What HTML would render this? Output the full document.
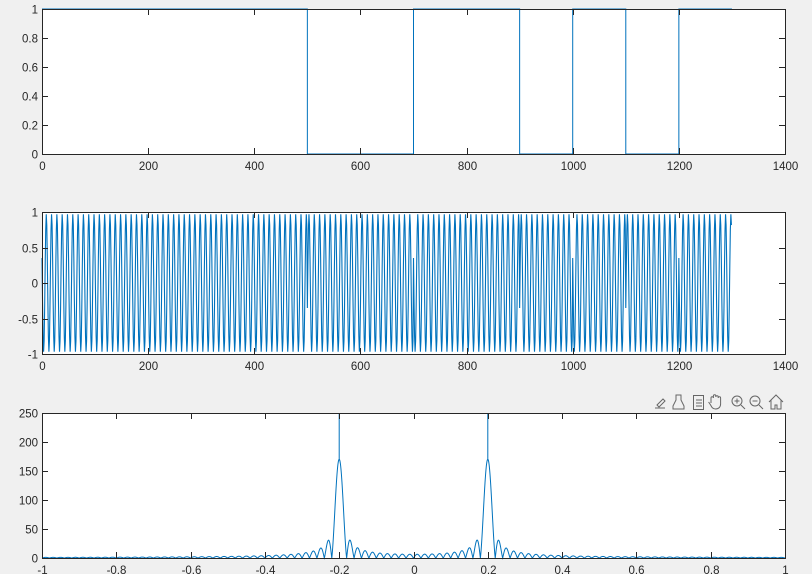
<!DOCTYPE html>
<html><head><meta charset="utf-8"><style>
html,body{margin:0;padding:0;background:#f0f0f0;width:812px;height:574px;overflow:hidden}
svg{display:block}
text{font-family:"Liberation Sans",sans-serif;font-size:11.5px;fill:#262626}
</style></head><body>
<svg id="s" width="812" height="574" xmlns="http://www.w3.org/2000/svg"></svg>
<script>
var S=document.getElementById('s'),out='';
var X0=42,X1=785;
function axes(y0,y1,xmin,xmax,ymin,ymax,xt,yt,xl,yl){
  var fx=function(v){return X0+(v-xmin)/(xmax-xmin)*(X1-X0)};
  var fy=function(v){return y1-(v-ymin)/(ymax-ymin)*(y1-y0)};
  out+='<rect x="'+X0+'" y="'+y0+'" width="'+(X1-X0)+'" height="'+(y1-y0)+'" fill="#fff"/>';
  return {fx:fx,fy:fy,fin:function(){
    out+='<rect x="'+(X0+.5)+'" y="'+(y0+.5)+'" width="'+(X1-X0)+'" height="'+(y1-y0)+'" fill="none" stroke="#262626" stroke-width="1"/>';
    xt.forEach(function(v,i){var x=Math.round(fx(v))+.5;
      out+='<line x1="'+x+'" y1="'+y1+'" x2="'+x+'" y2="'+(y1-6)+'" stroke="#262626"/><line x1="'+x+'" y1="'+y0+'" x2="'+x+'" y2="'+(y0+6)+'" stroke="#262626"/>';
      out+='<text x="'+x+'" y="'+(y1+16)+'" text-anchor="middle">'+xl[i]+'</text>';});
    yt.forEach(function(v,i){var y=Math.round(fy(v))+.5;
      out+='<line x1="'+X0+'" y1="'+y+'" x2="'+(X0+6)+'" y2="'+y+'" stroke="#262626"/><line x1="'+X1+'" y1="'+y+'" x2="'+(X1-6)+'" y2="'+y+'" stroke="#262626"/>';
      out+='<text x="'+(X0-4)+'" y="'+(y+4)+'" text-anchor="end">'+yl[i]+'</text>';});
  }};
}
function bit(n){if(n<500)return 1;if(n<700)return 0;if(n<900)return 1;if(n<1000)return 0;if(n<1100)return 1;if(n<1200)return 0;return 1;}
var N=1300,sig=[];
for(var n=0;n<N;n++)sig.push((2*bit(n)-1)*Math.cos(2*Math.PI*0.1*n+1.2));
var xt=[0,200,400,600,800,1000,1200,1400];
var a=axes(9,154,0,1400,0,1,xt,[0,.2,.4,.6,.8,1],xt,['0','0.2','0.4','0.6','0.8','1']);
var p='';for(var n=0;n<=N;n++){var b=bit(Math.min(n,N-1));p+=a.fx(n).toFixed(2)+','+a.fy(b).toFixed(2)+' ';if(n<N&&bit(n+1)!=b&&n+1<N)p+=a.fx(n+1).toFixed(2)+','+a.fy(b).toFixed(2)+' ';}
out+='<polyline points="'+p+'" fill="none" stroke="#0072bd" stroke-width="1"/>';a.fin();
a=axes(212,354,0,1400,-1,1,xt,[-1,-.5,0,.5,1],xt,['-1','-0.5','0','0.5','1']);
p='';for(var n=0;n<N;n++)p+=a.fx(n).toFixed(2)+','+a.fy(sig[n]*0.97).toFixed(2)+' ';
out+='<polyline points="'+p+'" fill="none" stroke="#0072bd" stroke-width="1.1"/>';a.fin();
var bx=[-1,-.8,-.6,-.4,-.2,0,.2,.4,.6,.8,1];
a=axes(413,558,-1,1,0,250,bx,[0,50,100,150,200,250],['-1','-0.8','-0.6','-0.4','-0.2','0','0.2','0.4','0.6','0.8','1'],['0','50','100','150','200','250']);
function sinc(d){var x=Math.PI*50*d;return Math.abs(x)<1e-9?1:Math.pow(Math.abs(Math.sin(x)/x),1.15);}
var M=4000;p='';
for(var k=0;k<=M;k++){var f=-1+2*k/M;
  var v=170*(sinc(f-0.2)+sinc(f+0.2));
  p+=a.fx(f).toFixed(2)+','+a.fy(Math.min(250,v)).toFixed(2)+' ';
  if(Math.abs(Math.abs(f)-0.2)<1e-9){p+=a.fx(f).toFixed(2)+','+a.fy(250).toFixed(2)+' '+a.fx(f).toFixed(2)+','+a.fy(v).toFixed(2)+' ';}
}
out+='<polyline points="'+p+'" fill="none" stroke="#0072bd" stroke-width="1"/>';a.fin();
var g='fill="none" stroke="#666" stroke-width="1"';
out+='<g '+g+'>'+
'<path d="M655 408h10M657 405l6-6 2 2-6 6z"/>'+
'<path d="M676 395h5v5l3 6v3h-11v-3l3-6zM674 409h9"/>'+
'<rect x="693.5" y="395.5" width="10" height="14"/><path d="M696 400h6M696 403h6M696 406h6"/>'+
'<path d="M711 403v-5a1.2 1.2 0 0 1 2.4 0v-2a1.2 1.2 0 0 1 2.4 0v1a1.2 1.2 0 0 1 2.4 0v1a1.2 1.2 0 0 1 2.4 0v6c0 3-2 5-5 5s-4-2-5-4l-2-3"/>'+
'<circle cx="737" cy="401" r="5"/><path d="M741 405l4 4M734.5 401h5M737 398.5v5"/>'+
'<circle cx="755" cy="401" r="5"/><path d="M759 405l4 4M752.5 401h5"/>'+
'<path d="M769 402l7-7 7 7M771 400v9h4v-4h2v4h4v-9"/>'+
'</g>';
S.innerHTML=out;
</script>
</body></html>
